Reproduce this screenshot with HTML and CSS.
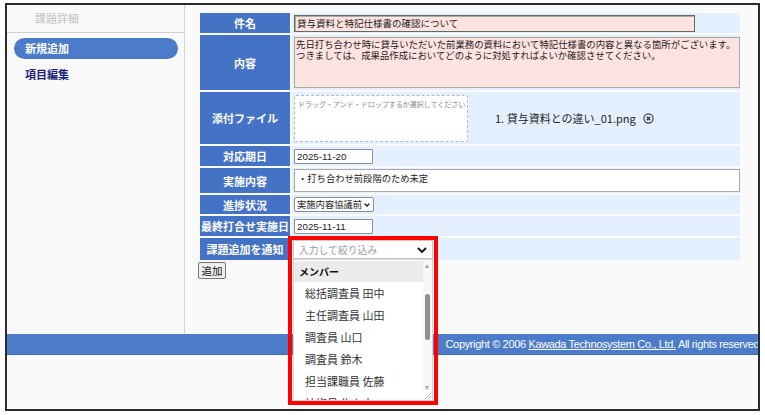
FILE: index.html
```html
<!DOCTYPE html>
<html lang="ja">
<head>
  <meta charset="UTF-8">
  <title>課題詳細</title>
  <link rel="stylesheet" href="styles.css">
</head>
<body>
  <div class="frame">
    <div class="wrap">
      <div class="sidebar">
        <div class="side-title">課題詳細</div>
        <div class="side-item active">新規追加</div>
        <div class="side-item">項目編集</div>
      </div>

      <div class="main">
        <table class="form">
          <tr class="r1">
            <th>件名</th>
            <td><div class="txt subject">貸与資料と特記仕様書の確認について</div></td>
          </tr>
          <tr class="r2">
            <th>内容</th>
            <td><div class="area pink">先日打ち合わせ時に貸与いただいた前業務の資料において特記仕様書の内容と異なる箇所がございます。<br>つきましては、成果品作成においてどのように対処すればよいか確認させてください。</div></td>
          </tr>
          <tr class="r3">
            <th>添付ファイル</th>
            <td>
              <div class="attach">
                <div class="drop">ドラッグ・アンド・ドロップするか選択してください</div>
                <div class="file">1. 貸与資料との違い_01.png
                  <svg class="del" width="11" height="11" viewBox="0 0 11 11"><circle cx="5.5" cy="5.5" r="4.6" fill="none" stroke="#333" stroke-width="1.1"/><path d="M3.8 3.8 L7.2 7.2 M7.2 3.8 L3.8 7.2" stroke="#333" stroke-width="1.3"/></svg>
                </div>
              </div>
            </td>
          </tr>
          <tr class="r4">
            <th>対応期日</th>
            <td><div class="date">2025-11-20</div></td>
          </tr>
          <tr class="r5">
            <th>実施内容</th>
            <td><div class="area white">・打ち合わせ前段階のため未定</div></td>
          </tr>
          <tr class="r6">
            <th>進捗状況</th>
            <td>
              <div class="select">実施内容協議前
                <svg width="6" height="4" viewBox="0 0 6 4"><path d="M0.6 0.6 L3 3 L5.4 0.6" fill="none" stroke="#111" stroke-width="1.3"/></svg>
              </div>
            </td>
          </tr>
          <tr class="r7">
            <th>最終打合せ実施日</th>
            <td><div class="date">2025-11-11</div></td>
          </tr>
          <tr class="r8">
            <th>課題追加を通知</th>
            <td>
              <div class="notify">
                <div class="combo">入力して絞り込み
                  <svg width="10" height="6" viewBox="0 0 10 6"><path d="M1 1 L5 5 L9 1" fill="none" stroke="#111" stroke-width="1.8"/></svg>
                </div>
                <div class="list">
                  <div class="list-body">
                    <div class="group">メンバー</div>
                    <div class="opt">総括調査員 田中</div>
                    <div class="opt">主任調査員 山田</div>
                    <div class="opt">調査員 山口</div>
                    <div class="opt">調査員 鈴木</div>
                    <div class="opt">担当課職員 佐藤</div>
                    <div class="opt">技術員 佐々木</div>
                  </div>
                  <div class="scroll">
                    <span class="arrow up"></span>
                    <span class="thumb"></span>
                    <span class="arrow down"></span>
                  </div>
                  <span class="grip"></span>
                </div>
                <div class="mark"></div>
              </div>
            </td>
          </tr>
        </table>
        <button class="btn">追加</button>
      </div>
    </div>

    <div class="footer">
      <span>Copyright © 2006 <a href="#">Kawada Technosystem Co., Ltd.</a> All rights reserved.</span>
    </div>
  </div>
</body>
</html>
```

FILE: styles.css
```css
* {
  box-sizing: border-box;
}

body {
  margin: 0;
  background: #ffffff;
  font-family: "Noto Sans CJK JP", "Liberation Sans", sans-serif;
  color: #222;
}

.frame {
  margin: 3px 0 0 5px;
  width: 755px;
  height: 408px;
  border: 2px solid #2a2a2a;
  background: #fafafa;
  overflow: hidden;
}

.wrap {
  display: flex;
  height: 329px;
}

/* sidebar */
.sidebar {
  width: 178px;
  border-right: 1px solid #d4d4d4;
}

.side-title {
  height: 28px;
  line-height: 27px;
  padding-left: 28px;
  font-size: 11px;
  color: #c2c2c2;
  border-bottom: 1px solid #d0d0d0;
}

.side-item {
  margin: 5px 0 0 7px;
  width: 164px;
  height: 21px;
  line-height: 21px;
  padding-left: 11px;
  font-size: 11px;
  font-weight: bold;
  color: #1b1f78;
}

.side-item.active {
  background: #4b7bc9;
  color: #ffffff;
  border-radius: 11px;
}

/* main form */
.main {
  flex: 1;
  padding: 6px 0 0 13px;
}

.form {
  border-spacing: 2px;
  width: 544px;
}

.form th {
  width: 92px;
  padding: 0;
  background: #4472c4;
  color: #ffffff;
  font-size: 11px;
  font-weight: bold;
  text-align: center;
  white-space: nowrap;
}

.form td {
  padding: 0 0 0 2px;
  background: #e4f0ff;
  vertical-align: middle;
}

.r1 { height: 20px; }
.r2 { height: 55px; }
.r3 { height: 52px; }
.r4 { height: 20px; }
.r5 { height: 25px; }
.r6 { height: 19px; }
.r7 { height: 20px; }
.r8 { height: 22px; }

.txt {
  font-size: 9.5px;
  line-height: 14px;
  padding-left: 2px;
}

.subject {
  width: 401px;
  height: 17px;
  background: #ffe3e0;
  border: 1px solid #666;
  box-shadow: inset 1px 1px 0 #aaa;
}

.area {
  width: 446px;
  font-size: 9.4px;
  line-height: 10.5px;
  padding: 1px 1px;
  border: 1px solid #a8a8a8;
  white-space: nowrap;
  overflow: hidden;
}

.area.pink {
  height: 51px;
  background: #ffe3e0;
}

.area.white {
  height: 23px;
  background: #ffffff;
  font-size: 9.3px;
  padding: 3px 3px;
}

.attach {
  display: flex;
  align-items: center;
  gap: 27px;
}

.drop {
  width: 174px;
  height: 47px;
  padding: 3px 3px;
  background: #ffffff;
  border: 1px dashed #b8b8b8;
  border-radius: 2px;
  font-size: 7.1px;
  letter-spacing: -0.1px;
  color: #8a8a8a;
  white-space: nowrap;
  overflow: hidden;
}

.file {
  display: flex;
  align-items: center;
  gap: 7px;
  font-size: 11px;
  color: #222;
  white-space: nowrap;
}

.date {
  width: 79px;
  height: 15px;
  padding-left: 2px;
  background: #ffffff;
  border: 1px solid #8d8d8d;
  border-radius: 1px;
  font-family: "Liberation Sans", sans-serif;
  font-size: 9.8px;
  line-height: 13px;
}

.select {
  display: flex;
  align-items: center;
  gap: 2px;
  width: 80px;
  height: 15px;
  padding-left: 2px;
  background: #ffffff;
  border: 1px solid #8d8d8d;
  border-radius: 2px;
  font-size: 9.3px;
  line-height: 13px;
  white-space: nowrap;
}

/* notify dropdown */
.notify {
  position: relative;
  width: 140px;
  height: 18px;
  margin-left: -1px;
}

.combo {
  display: flex;
  align-items: center;
  justify-content: space-between;
  height: 19px;
  padding: 0 5px 0 5px;
  background: #ffffff;
  border: 1px solid #c9c9c9;
  font-size: 9.8px;
  color: #9a9a9a;
}

.list {
  position: absolute;
  top: 19px;
  left: 0;
  width: 140px;
  height: 142px;
  background: #ffffff;
  border: 1px solid #d6d6d6;
  overflow: hidden;
  z-index: 5;
}

.list-body {
  padding-top: 1px;
  margin-right: 9px;
}

.group {
  height: 21px;
  line-height: 21px;
  padding-left: 5px;
  background: #ebebeb;
  font-size: 10px;
  font-weight: bold;
  color: #111;
}

.opt {
  height: 22px;
  line-height: 22px;
  padding-left: 11px;
  font-size: 11px;
  color: #333;
  white-space: nowrap;
}

.scroll {
  position: absolute;
  top: 0;
  right: 0;
  width: 9px;
  height: 130px;
  background: #f7f7f7;
}

.arrow {
  position: absolute;
  left: 2px;
  width: 0;
  height: 0;
  border-left: 2.5px solid transparent;
  border-right: 2.5px solid transparent;
}

.arrow.up {
  top: 4px;
  border-bottom: 4px solid #a3a3a3;
}

.arrow.down {
  bottom: 0;
  border-top: 4px solid #a3a3a3;
}

.thumb {
  position: absolute;
  top: 34px;
  left: 2px;
  width: 5px;
  height: 46px;
  border-radius: 3px;
  background: #8f8f8f;
}

.grip {
  position: absolute;
  right: 1px;
  bottom: 1px;
  width: 7px;
  height: 7px;
  background: linear-gradient(135deg, transparent 55%, #b5b5b5 55%, #b5b5b5 62%, transparent 62%, transparent 78%, #b5b5b5 78%, #b5b5b5 85%, transparent 85%);
}

.mark {
  position: absolute;
  top: -4px;
  left: -5px;
  width: 150px;
  height: 169px;
  border: 4px solid #ff0000;
  z-index: 6;
}

.btn {
  display: block;
  margin-top: 0;
  width: 28px;
  height: 17px;
  padding: 0;
  background: #efefef;
  border: 1px solid #767676;
  border-radius: 2px;
  font-family: "Noto Sans CJK JP", sans-serif;
  font-size: 10.5px;
  line-height: 14px;
  color: #111;
}

/* footer */
.footer {
  height: 21px;
  line-height: 21px;
  background: #4b7bc9;
  border-bottom: 1px solid #3f6db8;
  text-align: right;
  white-space: nowrap;
  overflow: hidden;
  font-family: "Liberation Sans", sans-serif;
  font-size: 11px;
  letter-spacing: -0.35px;
  color: #ffffff;
}

.footer span {
  margin-right: -4px;
}

.footer a {
  color: #ffffff;
}
```
